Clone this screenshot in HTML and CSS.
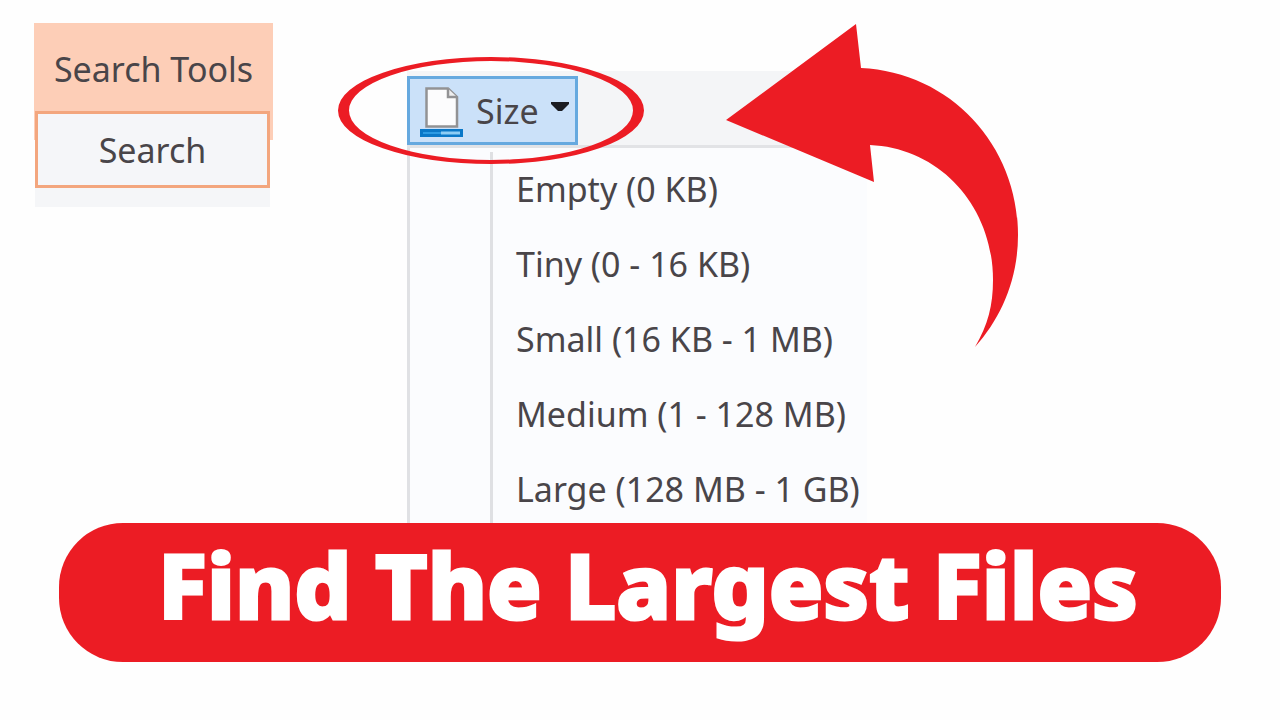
FILE: index.html
```
<!DOCTYPE html>
<html lang="en">
<head>
  <meta charset="UTF-8">
  <meta name="viewport" content="width=device-width, initial-scale=1.0">
  <title>Find The Largest Files</title>
  <link rel="stylesheet" href="styles.css">
</head>
<body>
  <main class="stage">
    <!-- Ribbon tabs -->
    <div class="tabs">
      <div class="tabs-title">Search Tools</div>
      <button class="tab" type="button">Search</button>
      <div class="tabs-foot"></div>
    </div>

    <!-- Size menu -->
    <div class="panel">
      <div class="ribbon">
        <button class="size-button" type="button">
          <svg class="size-icon" viewBox="0 0 44 52" aria-hidden="true">
            <path d="M6.500 3.500H28L37 12V41.500H6.500Z" fill="#fcfcfd" stroke="#929294" stroke-width="2.500"/>
            <path d="M28 3.500V12H37" fill="#eeeeef" stroke="#929294" stroke-width="2.500"/>
            <rect x="1.500" y="45.500" width="40" height="5" fill="#2c9be4" stroke="#0a78c8" stroke-width="3"/>
            <path d="M21 48H40" stroke="#8dcdf5" stroke-width="3"/>
          </svg>
          <span>Size</span>
          <svg class="caret" viewBox="0 0 18 10" aria-hidden="true">
            <path d="M0 0H18V2L11 9H7L0 2Z" fill="#1b1c22"/>
          </svg>
        </button>
      </div>
      <div class="menu">
        <button class="menu-item" type="button">Empty (0 KB)</button>
        <button class="menu-item" type="button">Tiny (0 - 16 KB)</button>
        <button class="menu-item" type="button">Small (16 KB - 1 MB)</button>
        <button class="menu-item" type="button">Medium (1 - 128 MB)</button>
        <button class="menu-item" type="button">Large (128 MB - 1 GB)</button>
      </div>

      <!-- Red marks drawn over the menu -->
      <svg class="ring" viewBox="0 0 306 107" aria-hidden="true">
        <path fill="#ec1c24" fill-rule="evenodd" d="M0 53.500A153 53.500 0 0 1 306 53.500A153 53.500 0 0 1 0 53.500ZM11 53.500A142 49.500 0 0 0 295 53.500A142 49.500 0 0 0 11 53.500Z"/>
      </svg>
      <svg class="arrow" viewBox="0 0 294 324" aria-hidden="true">
        <path fill="#ec1c24" d="M0 96L130 0L135 44C224 48 292 121 292 211C292 256 275 294 249 323C262 301 267 281 267 256C267 182 214 124 144 121L148 158Z"/>
      </svg>
    </div>
  </main>

  <h1 class="banner">Find The Largest Files</h1>
</body>
</html>
```

FILE: styles.css
```
/* General Styles */
* {
  box-sizing: border-box;
}

body {
  margin: 0;
  background-color: #fefefe;
  color: #494549;
  font-family: "Noto Sans", "Open Sans", sans-serif;
  font-size: 34px;
  line-height: 46px;
}

button {
  margin: 0;
  padding: 0;
  border: none;
  background: none;
  color: inherit;
  font: inherit;
  cursor: pointer;
}

.stage {
  display: flex;
  align-items: flex-start;
  gap: 134px;
  padding: 23px 34px 0;
}

/* Ribbon Tabs */
.tabs {
  display: flex;
  flex-direction: column;
  width: 239px;
}

.tabs-title {
  padding: 23px 0 48px;
  background-color: #fdceb7;
  text-align: center;
}

.tab {
  height: 77px;
  margin: -29px 3px 0 1px;
  border: 3px solid #f3a67e;
  background-color: #f5f6f9;
}

.tabs-foot {
  height: 19px;
  margin: 0 3px 0 1px;
  background-color: #f5f6f8;
}

/* Size Menu */
.panel {
  position: relative;
  margin-top: 48px;
  background-color: #fbfcfe;
}

.ribbon {
  padding: 5px 0 0;
  border-bottom: 3px solid #e2e3e6;
  background-color: #f4f5f7;
}

.size-button {
  display: flex;
  align-items: center;
  gap: 12px;
  height: 69px;
  padding: 0 6px 0 10px;
  border: 3px solid #66a9df;
  background-color: #cbe1f9;
}

.size-icon {
  width: 44px;
  height: 52px;
}

.caret {
  width: 18px;
  height: 10px;
  margin-bottom: 8px;
}

.menu {
  display: flex;
  flex-direction: column;
  align-items: flex-start;
  gap: 29px;
  padding: 18px 7px 11px 106px;
  border-left: 3px solid #e0e1e4;
  background: linear-gradient(#dfe0e3, #dfe0e3) 80px 4px / 3px 100% no-repeat;
}

.menu-item {
  white-space: nowrap;
}

/* Red Marks */
.ring {
  position: absolute;
  top: -14px;
  left: -69px;
  width: 306px;
  height: 107px;
}

.arrow {
  position: absolute;
  top: -47px;
  left: 319px;
  width: 294px;
  height: 324px;
}

/* Banner */
.banner {
  margin: 0 59px;
  padding: 0 0 17px 16px;
  border-radius: 64px;
  background-color: #ec1c24;
  color: #fff;
  font-size: 90px;
  font-weight: 800;
  line-height: 122px;
  text-align: center;
  -webkit-text-stroke: 3px #fff;
}
```
